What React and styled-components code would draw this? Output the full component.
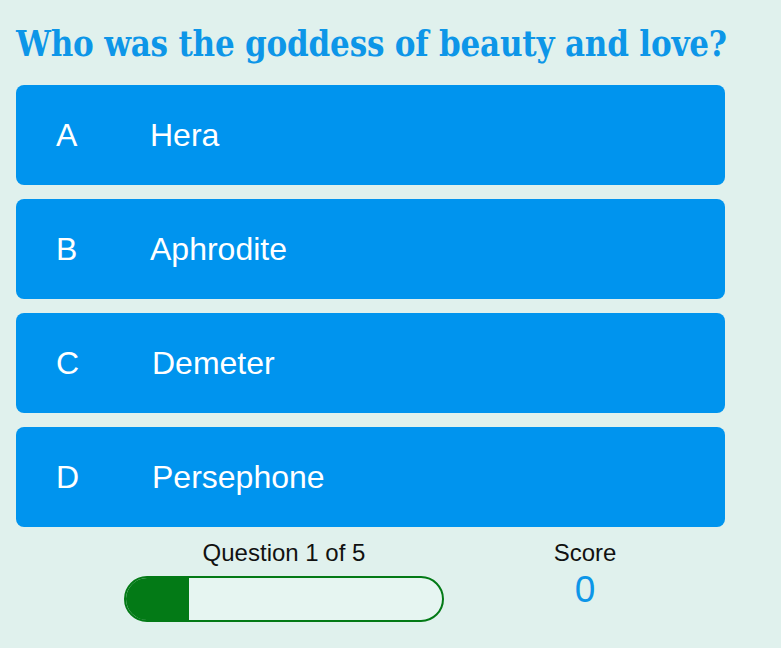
import React from "react";
import styled, { createGlobalStyle } from "styled-components";

const GlobalStyle = createGlobalStyle`
  html, body {
    margin: 0;
    padding: 0;
    background: #e0f1ed;
  }
  body {
    font-family: "Liberation Sans", Arial, sans-serif;
  }
`;

// Page wrapper
const Page = styled.div`
  width: 781px;
  height: 648px;
  box-sizing: border-box;
  padding: 22px 16px 0;
  background: #e0f1ed;
  overflow: hidden;
`;

const Question = styled.h1`
  margin: 0 0 19px;
  font-family: "DejaVu Serif Condensed", "DejaVu Serif", serif;
  font-weight: 700;
  font-size: 34.5px;
  line-height: 44px;
  color: #0d96e8;
  letter-spacing: -0.2px;
  white-space: nowrap;
`;

const Answers = styled.div`
  display: flex;
  flex-direction: column;
  gap: 14px;
  width: 709px;
`;

const Answer = styled.button`
  display: flex;
  align-items: center;
  height: 100px;
  padding: 0 0 0 40px;
  border: none;
  border-radius: 8px;
  background: #0094ee;
  color: #fff;
  font-family: "Liberation Sans", Arial, sans-serif;
  font-size: 32px;
  cursor: pointer;
  text-align: left;
`;

const Letter = styled.span`
  width: ${({ $w }) => $w || 94}px;
  flex-shrink: 0;
`;

// Footer with progress and score
const Footer = styled.div`
  display: flex;
  align-items: flex-start;
  padding: 12px 0 0 108px;
  gap: 91px;
`;

const ProgressCol = styled.div`
  display: flex;
  flex-direction: column;
  align-items: center;
  width: 320px;
  gap: 9px;
`;

const Label = styled.div`
  font-size: 24px;
  line-height: 28px;
  color: #111;
`;

const Bar = styled.div`
  width: 320px;
  height: 46px;
  box-sizing: border-box;
  border: 2.5px solid #037a16;
  border-radius: 23px;
  background: #e6f5f1;
  overflow: hidden;
`;

const Fill = styled.div`
  height: 100%;
  background: #037a16;
`;

const ScoreCol = styled.div`
  display: flex;
  flex-direction: column;
  align-items: center;
  width: 100px;
`;

const ScoreValue = styled.div`
  margin-top: 3px;
  font-size: 37px;
  line-height: 40px;
  color: #0d96e8;
`;

const answers = [
  { letter: "A", text: "Hera", w: 94 },
  { letter: "B", text: "Aphrodite", w: 94 },
  { letter: "C", text: "Demeter", w: 96 },
  { letter: "D", text: "Persephone", w: 96 },
];

export default function App() {
  const current = 1;
  const total = 5;
  return (
    <Page>
      <GlobalStyle />
      <Question>Who was the goddess of beauty and love?</Question>
      <Answers>
        {answers.map((a) => (
          <Answer key={a.letter}>
            <Letter $w={a.w}>{a.letter}</Letter>
            <span>{a.text}</span>
          </Answer>
        ))}
      </Answers>
      <Footer>
        <ProgressCol>
          <Label>
            Question {current} of {total}
          </Label>
          <Bar>
            <Fill style={{ width: `${(current / total) * 100}%` }} />
          </Bar>
        </ProgressCol>
        <ScoreCol>
          <Label>Score</Label>
          <ScoreValue>0</ScoreValue>
        </ScoreCol>
      </Footer>
    </Page>
  );
}
